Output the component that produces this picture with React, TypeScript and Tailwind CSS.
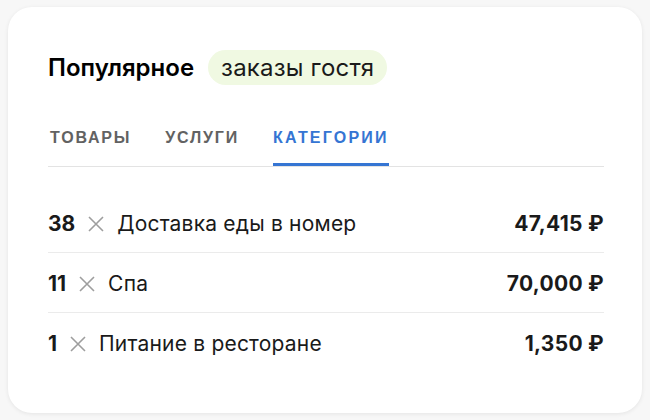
const rows = [
  { qty: 38, label: "Доставка еды в номер", amount: "47,415 ₽" },
  { qty: 11, label: "Спа", amount: "70,000 ₽" },
  { qty: 1, label: "Питание в ресторане", amount: "1,350 ₽" },
];

const tabs = [
  { label: "Товары", active: false },
  { label: "Услуги", active: false },
  { label: "Категории", active: true },
];

function Times() {
  return (
    <svg viewBox="0 0 16 16" className="mx-[13px] h-4 w-4 shrink-0" fill="none" stroke="#9e9e9e" strokeWidth="1.6">
      <path d="M1 1L15 15M15 1L1 15" />
    </svg>
  );
}

export default function App() {
  return (
    <div className="h-[420px] w-[650px] bg-[#f7f7f7] px-2 pt-[7px] font-['Inter',sans-serif]">
      <div className="h-[406px] w-[634px] rounded-[24px] bg-white pl-10 pr-[38px] pt-[43px] shadow-[0_1px_4px_rgba(0,0,0,0.08)]">
        <div className="flex items-center gap-[14px]">
          <h2 className="text-[24px] font-semibold leading-none text-black">Популярное</h2>
          <span className="rounded-full bg-[#f0f9e2] px-[13px] py-[5.5px] text-[24px] leading-[24px] tracking-[0.2px] text-[#1a1a1a]">
            заказы гостя
          </span>
        </div>

        <div className="mt-[44px] flex gap-[34px] border-b border-[#e3e3e3] pl-[2px]">
          {tabs.map((t) => (
            <div
              key={t.label}
              className={
                t.active
                  ? "border-b-[3px] border-[#3575d3] pb-[16px] font-['Liberation_Sans',sans-serif] text-[16px] leading-[18px] font-bold uppercase tracking-[2.2px] text-[#3575d3]"
                  : "border-b-[3px] border-transparent pb-[16px] font-['Liberation_Sans',sans-serif] text-[16px] leading-[18px] font-bold uppercase tracking-[1.8px] text-[#626262]"
              }
            >
              {t.label}
            </div>
          ))}
        </div>

        <ul className="mt-[26px]">
          {rows.map((r, i) => (
            <li
              key={r.label}
              className={
                i < rows.length - 1
                  ? "flex h-[60px] items-center justify-between border-b border-[#ebebeb] pt-[2px]"
                  : "flex h-[60px] items-center justify-between pt-[2px]"
              }
            >
              <div className="flex items-center text-[21px] text-[#1a1a1a]">
                <span className="font-bold">{r.qty}</span>
                <Times />
                <span className="tracking-[0.2px]">{r.label}</span>
              </div>
              <span className="text-[21px] font-bold tracking-[0.3px] text-[#1a1a1a]">{r.amount}</span>
            </li>
          ))}
        </ul>
      </div>
    </div>
  );
}
